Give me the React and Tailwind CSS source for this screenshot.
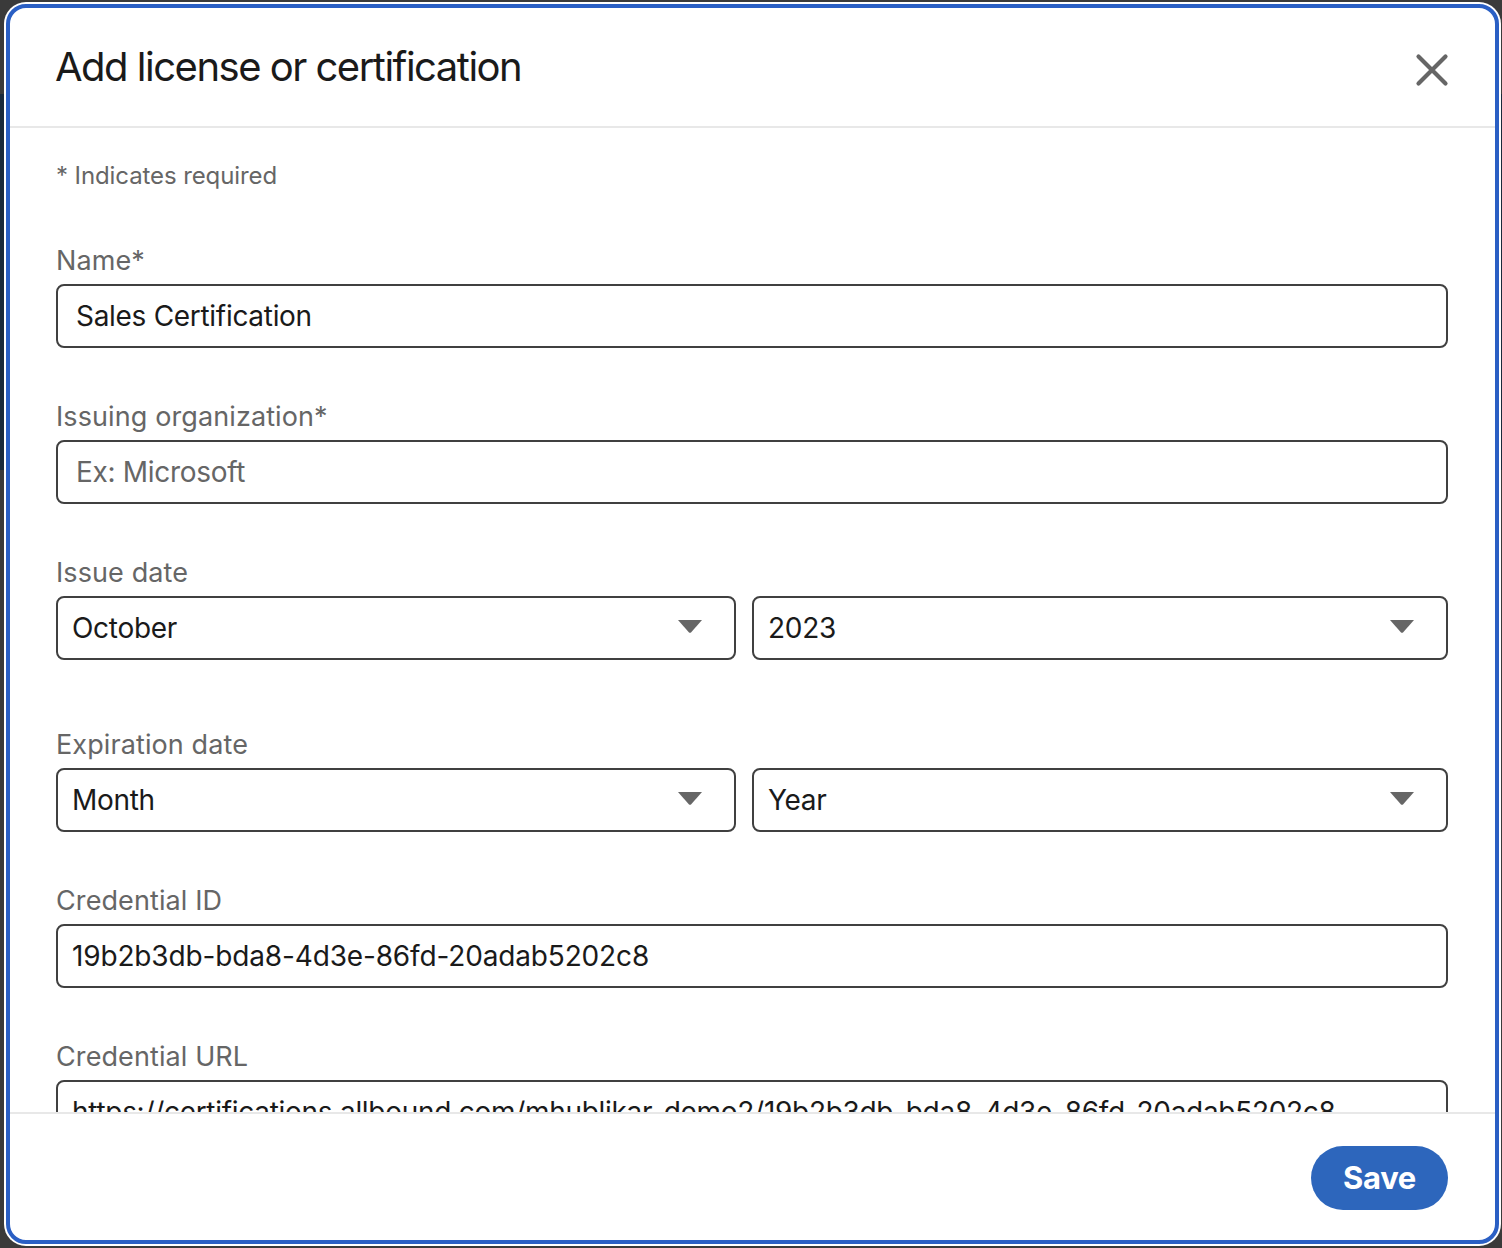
const font = "font-['Inter','Liberation_Sans',sans-serif]";

function Caret() {
  return (
    <svg width="24" height="13" viewBox="0 0 24 13" className="mb-[3px] shrink-0">
      <path d="M0 0 H24 L13 12.6 Q12 13 11 12.6 Z" fill="#666666" />
    </svg>
  );
}

function Label({ children }) {
  return <label className="block h-[39px] text-[27px] leading-[32px] tracking-[0.1px] text-[#666666]">{children}</label>;
}

function Field({ label, value, placeholder, inset = "pl-[14px]", spacing = "tracking-[-0.3px]" }) {
  return (
    <div>
      <Label>{label}</Label>
      <div className={`flex h-16 items-center whitespace-nowrap rounded-lg border-2 border-[#404040] text-[28px] text-[#1a1a1a] ${inset} ${spacing}`}>
        {placeholder ? <span className="text-[#666666]">{placeholder}</span> : value}
      </div>
    </div>
  );
}

function Select({ value, className = "" }) {
  return (
    <div className={`flex h-16 items-center justify-between rounded-lg border-2 border-[#404040] pl-[14px] pr-[32px] text-[28px] tracking-[-0.3px] text-[#1a1a1a] ${className}`}>
      {value}
      <Caret />
    </div>
  );
}

function DateRow({ label, left, right }) {
  return (
    <div>
      <Label>{label}</Label>
      <div className="flex gap-4">
        <Select value={left} className="w-[680px]" />
        <Select value={right} className="flex-1" />
      </div>
    </div>
  );
}

export default function App() {
  return (
    <div className={`h-[1248px] w-[1502px] overflow-hidden bg-[linear-gradient(#3a3a3a_94px,#1a2a3c_94px,#1a2a3c_470px,#3a3a3a_470px)] pb-[2px] pl-[4px] pr-[1px] pt-[2px] ${font}`}>
      <div className="h-[1244px] rounded-[22px] bg-white p-[2px]">
        <div className="flex h-full flex-col overflow-hidden rounded-[20px] border-4 border-[#2a5fc4] bg-white">
          {/* Header */}
          <div className="flex h-[120px] shrink-0 items-start justify-between border-b-2 border-[#e8e8e8] pl-[45px] pr-[45px]">
            <h2 className="mt-[34px] text-[40px] leading-[50px] tracking-[-1.5px] text-[#1a1a1a]">Add license or certification</h2>
            <svg width="36" height="36" viewBox="0 0 36 36" className="mt-[44px]" fill="none" stroke="#666666" strokeWidth="4.2" strokeLinecap="round">
              <path d="M4.5 4.5 L31.5 31.5 M31.5 4.5 L4.5 31.5" />
            </svg>
          </div>

          {/* Scrolling form */}
          <div className="flex-1 overflow-hidden pl-[46px] pr-[47px]">
            <p className="mt-[32px] text-[24px] leading-[32px] tracking-[-0.1px] text-[#666666]">* Indicates required</p>
            <div className="mt-[53px] flex flex-col gap-[53px]">
              <Field label="Name*" value="Sales Certification" inset="pl-[18px]" />
              <Field label="Issuing organization*" placeholder="Ex: Microsoft" inset="pl-[18px]" />
            </div>
            <div className="mt-[53px] flex flex-col gap-[69px]">
              <DateRow label="Issue date" left="October" right="2023" />
              <DateRow label="Expiration date" left="Month" right="Year" />
            </div>
            <div className="mt-[53px] flex flex-col gap-[53px]">
              <Field label="Credential ID" value="19b2b3db-bda8-4d3e-86fd-20adab5202c8" spacing="tracking-[-0.15px]" />
              <Field label="Credential URL" value="https://certifications.allbound.com/mhublikar-demo2/19b2b3db-bda8-4d3e-86fd-20adab5202c8" />
            </div>
          </div>

          {/* Footer */}
          <div className="flex h-[128px] shrink-0 items-start justify-end border-t-2 border-[#e8e8e8] pr-[47px] pt-[32px]">
            <button className="h-16 w-[137px] rounded-full bg-[#2d66bc] text-[31px] font-bold tracking-[-0.3px] text-white">Save</button>
          </div>
        </div>
      </div>
    </div>
  );
}
